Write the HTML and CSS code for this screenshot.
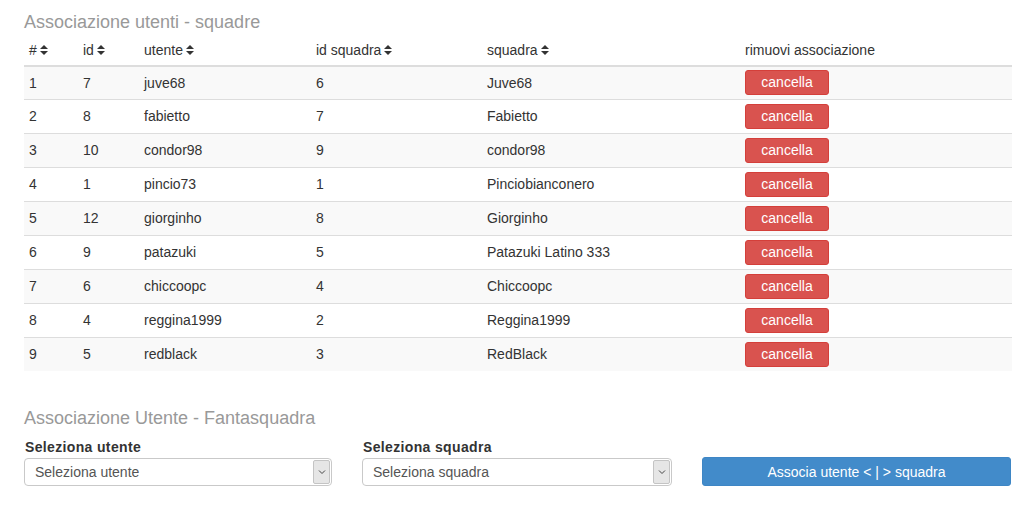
FILE: index.html
```html
<!DOCTYPE html>
<html lang="it">
<head>
<meta charset="utf-8">
<title>Associazione utenti</title>
<link rel="stylesheet" href="styles.css">
</head>
<body>
<div class="page">
  <h3 class="title">Associazione utenti - squadre</h3>
  <table class="grid">
    <colgroup>
      <col class="c1"><col class="c2"><col class="c3"><col class="c4"><col class="c5"><col class="c6">
    </colgroup>
    <thead>
      <tr>
        <th>#<svg class="sort" viewBox="0 0 8 12"><path d="M0 5 L4 1 L8 5 Z M0 7 L8 7 L4 11 Z"/></svg></th>
        <th>id<svg class="sort" viewBox="0 0 8 12"><path d="M0 5 L4 1 L8 5 Z M0 7 L8 7 L4 11 Z"/></svg></th>
        <th>utente<svg class="sort" viewBox="0 0 8 12"><path d="M0 5 L4 1 L8 5 Z M0 7 L8 7 L4 11 Z"/></svg></th>
        <th>id squadra<svg class="sort" viewBox="0 0 8 12"><path d="M0 5 L4 1 L8 5 Z M0 7 L8 7 L4 11 Z"/></svg></th>
        <th>squadra<svg class="sort" viewBox="0 0 8 12"><path d="M0 5 L4 1 L8 5 Z M0 7 L8 7 L4 11 Z"/></svg></th>
        <th>rimuovi associazione</th>
      </tr>
    </thead>
    <tbody>
      <tr><td>1</td><td>7</td><td>juve68</td><td>6</td><td>Juve68</td><td><button class="btn-del">cancella</button></td></tr>
      <tr><td>2</td><td>8</td><td>fabietto</td><td>7</td><td>Fabietto</td><td><button class="btn-del">cancella</button></td></tr>
      <tr><td>3</td><td>10</td><td>condor98</td><td>9</td><td>condor98</td><td><button class="btn-del">cancella</button></td></tr>
      <tr><td>4</td><td>1</td><td>pincio73</td><td>1</td><td>Pinciobianconero</td><td><button class="btn-del">cancella</button></td></tr>
      <tr><td>5</td><td>12</td><td>giorginho</td><td>8</td><td>Giorginho</td><td><button class="btn-del">cancella</button></td></tr>
      <tr><td>6</td><td>9</td><td>patazuki</td><td>5</td><td>Patazuki Latino 333</td><td><button class="btn-del">cancella</button></td></tr>
      <tr><td>7</td><td>6</td><td>chiccoopc</td><td>4</td><td>Chiccoopc</td><td><button class="btn-del">cancella</button></td></tr>
      <tr><td>8</td><td>4</td><td>reggina1999</td><td>2</td><td>Reggina1999</td><td><button class="btn-del">cancella</button></td></tr>
      <tr><td>9</td><td>5</td><td>redblack</td><td>3</td><td>RedBlack</td><td><button class="btn-del">cancella</button></td></tr>
    </tbody>
  </table>

  <h3 class="title title-2">Associazione Utente - Fantasquadra</h3>
  <div class="form-row">
    <div class="field">
      <label class="lbl">Seleziona utente</label>
      <div class="select"><span class="select-text">Seleziona utente</span><span class="select-arrow"><svg viewBox="0 0 8 6"><path d="M1 1.5 L4 4.5 L7 1.5" fill="none" stroke="#444" stroke-width="1"/></svg></span></div>
    </div>
    <div class="field">
      <label class="lbl">Seleziona squadra</label>
      <div class="select"><span class="select-text">Seleziona squadra</span><span class="select-arrow"><svg viewBox="0 0 8 6"><path d="M1 1.5 L4 4.5 L7 1.5" fill="none" stroke="#444" stroke-width="1"/></svg></span></div>
    </div>
    <div class="field field-btn">
      <button class="btn-assoc">Associa utente &lt; | &gt; squadra</button>
    </div>
  </div>
</div>
</body>
</html>
```

FILE: styles.css
```css
* { box-sizing: border-box; }
html, body { margin: 0; padding: 0; background: #fff; }
body {
  font-family: "Liberation Sans", Arial, Helvetica, sans-serif;
  font-size: 14px;
  line-height: 20px;
  color: #333;
}
.page {
  width: 988px;
  margin-left: 24px;
  padding-top: 12px;
}
.title {
  margin: 0 0 2px 0;
  font-size: 18px;
  line-height: 20px;
  font-weight: normal;
  color: #999;
}
.grid {
  width: 988px;
  border-collapse: collapse;
  border-spacing: 0;
}
.c1 { width: 54px; }
.c2 { width: 61px; }
.c3 { width: 172px; }
.c4 { width: 171px; }
.c5 { width: 258px; }
.c6 { width: 272px; }
.grid th {
  text-align: left;
  font-weight: normal;
  padding: 5px 5px;
  height: 32px;
  border-bottom: 2px solid #ddd;
  vertical-align: middle;
  white-space: nowrap;
}
.sort {
  width: 8px;
  height: 12px;
  margin-left: 3px;
  vertical-align: -1px;
  fill: #333;
}
.grid td {
  padding: 0 5px;
  height: 34px;
  border-top: 1px solid #ddd;
  vertical-align: middle;
}
.grid tbody tr:first-child td { border-top: 0; height: 33px; }
.grid tbody tr:nth-child(odd) td { background: #f9f9f9; }
.btn-del {
  display: block;
  width: 84px;
  height: 25px;
  padding: 0;
  font-family: inherit;
  font-size: 14px;
  line-height: 23px;
  color: #fff;
  background: #d9534f;
  border: 1px solid #d43f3a;
  border-radius: 3px;
  text-align: center;
}
.title-2 { margin-top: 37px; margin-bottom: 10px; }
.form-row {
  display: grid;
  grid-template-columns: 308px 310px 309px;
  column-gap: 30px;
  align-items: end;
}
.field { display: flex; flex-direction: column; }
.lbl {
  font-weight: bold;
  font-size: 14px;
  line-height: 18px;
  letter-spacing: 0.35px;
  padding-left: 1px;
  color: #333;
  margin-bottom: 2px;
}
.select {
  display: flex;
  align-items: stretch;
  height: 28px;
  border: 1px solid #c9c9c9;
  border-radius: 4px;
  background: #fff;
  overflow: hidden;
}
.select-text {
  flex: 1;
  padding-left: 10px;
  line-height: 26px;
  color: #555;
}
.select-arrow {
  width: 17px;
  margin: 1px;
  background: #e6e6e6;
  border: 1px solid #c4c4c4;
  border-radius: 2px;
  display: flex;
  align-items: center;
  justify-content: center;
}
.select-arrow svg { width: 8px; height: 6px; }
.btn-assoc {
  height: 29px;
  width: 100%;
  font-family: inherit;
  font-size: 14px;
  color: #fff;
  background: #428bca;
  border: 1px solid #3e86c5;
  border-radius: 3px;
  padding: 0;
  margin-bottom: 0;
}
```
